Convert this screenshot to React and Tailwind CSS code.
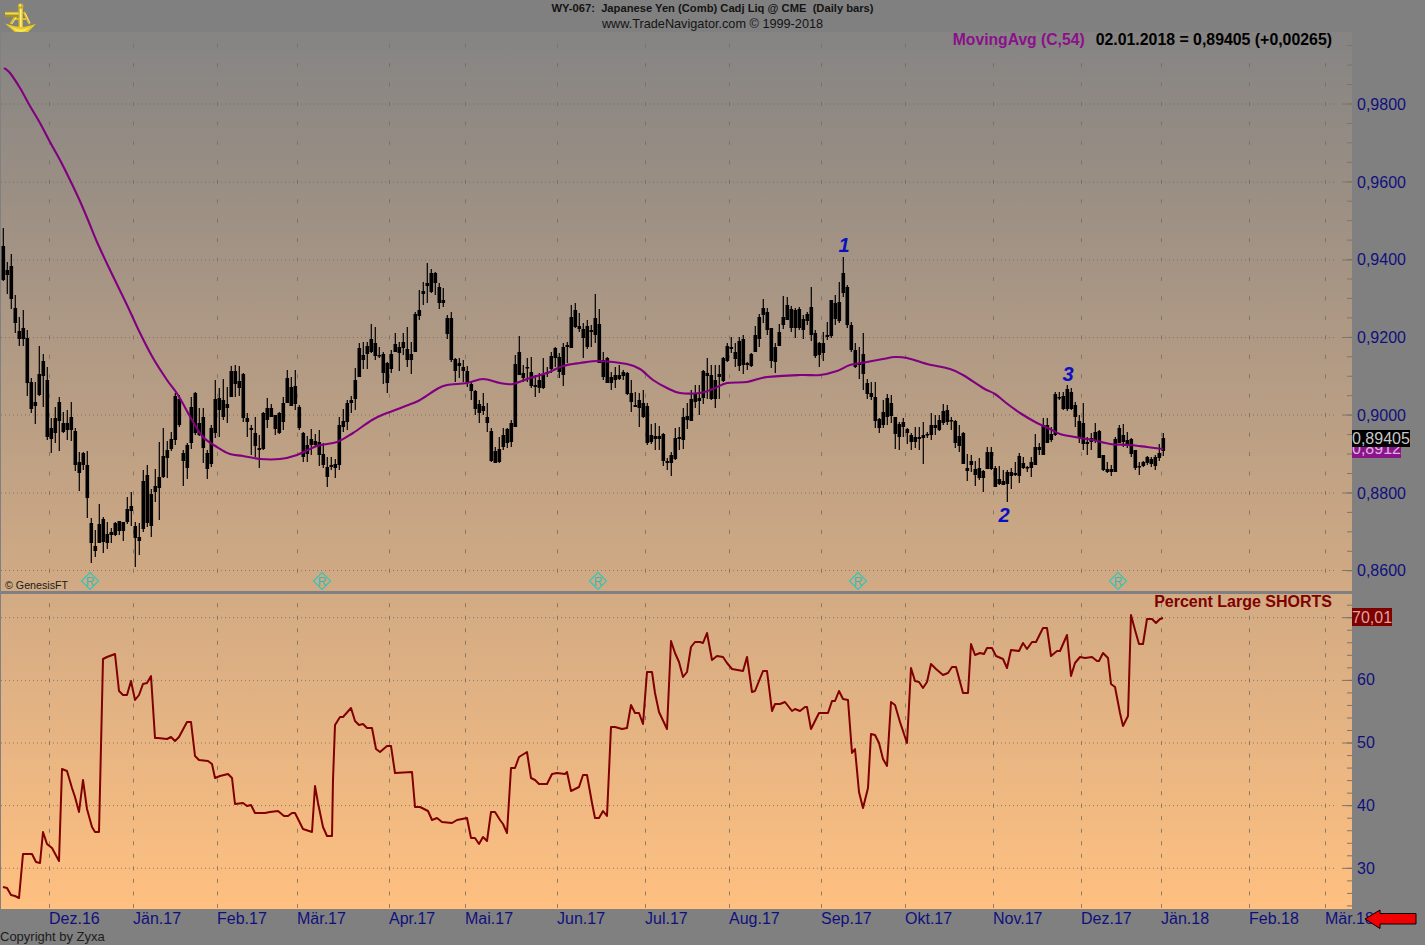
const candles = [
[228,246,280,281],[262,270,275,294],[254,266,299,309],[295,308,323,333],[317,331,339,346],[310,328,339,346],[330,338,383,396],[378,382,409,413],[382,402,406,424],[346,374,395,396],
[354,361,376,407],[367,380,437,440],[418,428,439,453],[407,418,433,443],[397,402,421,451],[412,423,432,433],[410,423,430,440],[402,417,430,441],[428,431,465,471],[452,462,473,491],
[452,453,465,470],[451,465,498,518],[518,523,543,563],[530,546,551,557],[504,524,543,543],[517,519,542,553],[522,534,543,549],[528,532,535,543],[522,523,535,536],[521,521,531,535],
[522,522,531,541],[497,509,522,524],[492,506,511,526],[522,526,538,567],[523,537,541,555],[470,481,529,532],[465,475,523,527],[489,494,526,537],[469,486,492,502],[442,477,488,520],
[428,456,477,478],[441,450,458,478],[432,439,449,451],[393,396,440,445],[395,399,425,427],[450,453,461,486],[443,445,468,479],[397,407,443,449],[392,393,433,435],[408,423,435,436],
[408,417,448,463],[450,453,469,479],[425,428,464,467],[380,399,433,438],[388,398,410,437],[379,400,417,420],[387,404,408,423],[366,371,397,397],[365,371,384,397],[366,381,388,396],
[373,374,418,422],[413,418,422,437],[425,428,430,455],[417,433,446,457],[435,448,450,468],[412,413,449,450],[398,408,420,428],[404,408,417,417],[415,415,429,435],[412,413,433,434],
[397,403,422,430],[370,378,403,403],[377,387,406,406],[370,386,404,410],[405,407,428,430],
[432,433,457,462],[436,445,454,462],[429,439,445,455],[434,441,445,447],[430,442,455,466],[443,454,465,468],[457,467,477,487],[457,465,467,470],[459,464,468,478],[417,425,465,470],
[409,421,427,432],[400,403,422,430],[396,400,403,413],[368,380,399,410],[343,348,377,377],[342,355,360,369],[342,346,354,369],[324,339,352,353],[327,343,356,360],[347,355,356,358],
[352,354,373,384],[362,363,383,393],[350,354,369,373],[333,344,352,352],[342,347,353,371],[333,342,348,355],[327,349,360,367],[342,354,360,374],[312,314,352,352],[290,310,316,320],
[282,291,294,305],[263,283,286,303],[269,273,292,293],[272,273,283,295],[283,287,303,309],[288,300,303,307],[315,318,334,339],[312,318,360,362],[358,359,371,382],[358,363,366,378],
[360,367,371,382],[366,371,382,387],[382,384,391,400],[390,391,409,415],[400,404,413,423],[393,406,411,415],[403,417,423,432],[428,431,461,462],[447,451,463,463],[437,449,462,463],
[428,435,447,450],[428,429,443,448],[420,423,442,447],[355,364,427,427],[336,352,375,375],[365,373,378,382],[358,367,368,382],[357,372,386,388],[375,385,387,397],[373,380,388,393],
[358,375,388,389],[367,372,373,377],[352,356,369,373],[347,348,358,367],[353,357,372,378],[343,347,375,386],[342,345,347,363],[305,317,348,348],[303,310,327,328],[313,326,329,332],
[323,329,338,358],[320,326,347,349],[325,330,332,347],[294,318,335,343],[309,324,363,363],
[352,360,377,380],[357,358,383,383],[372,377,383,390],[367,375,380,388],[365,375,379,380],[370,372,376,380],[372,373,394,395],[380,393,402,412],[392,405,407,407],[393,400,408,427],
[390,403,417,418],[403,406,443,445],[424,435,442,444],[423,436,439,450],[426,436,439,450],[433,434,461,466],[458,461,463,470],[452,455,463,476],[428,438,459,460],[427,437,439,450],
[408,417,440,449],[403,416,420,429],[390,399,421,421],[385,393,402,408],[385,398,401,415],[370,371,398,404],[358,373,376,399],[365,375,399,400],[365,380,399,408],[365,374,377,399],
[357,358,381,382],[343,346,361,362],[337,347,349,353],[343,352,359,367],[337,341,366,371],[335,339,365,374],[362,363,365,370],[353,354,366,367],[326,335,352,352],[314,317,339,347],
[299,308,315,323],[308,312,330,335],[328,328,361,368],[343,347,362,373],[324,332,346,346],[296,317,325,329],[297,305,320,320],[306,309,328,332],[308,310,328,338],[307,309,328,330],
[315,319,330,339],[312,314,321,325],[287,307,335,341],[330,333,356,358],[342,343,355,367],[332,343,353,361],[322,335,337,340],[300,300,336,338],[295,303,319,325],[282,302,321,323],
[257,273,293,297],[285,287,325,328],[322,325,350,352],[343,350,367,368],[347,363,365,379],[333,354,374,390],[379,383,394,399],[382,393,397,400],[382,397,421,428],[418,419,428,433],
[400,412,425,428],[394,398,417,425],[395,403,416,423],[417,417,434,449],[422,424,437,450],
[418,422,427,437],[428,429,433,444],[433,435,442,450],[427,437,442,448],[427,437,439,450],[422,435,438,464],[432,434,435,438],[413,425,435,440],[415,425,428,435],[415,420,430,431],
[404,411,423,425],[405,410,422,425],[417,420,421,430],[420,421,443,448],[425,436,446,452],[432,433,464,464],[454,468,471,481],[455,461,465,472],[461,469,475,486],[458,468,478,480],
[470,471,478,492],[447,452,469,469],[447,452,469,470],[466,468,487,487],[466,479,484,485],[470,481,485,485],[470,472,484,502],[468,472,476,489],[462,473,475,476],[453,456,476,483],
[457,463,468,469],[466,467,468,472],[457,462,468,477],[434,447,465,465],[443,447,450,455],[418,425,455,455],[418,425,443,443],[427,434,440,442],[392,394,435,436],[392,397,398,400],
[392,396,409,410],[385,389,409,411],[388,392,409,410],[402,405,417,427],[415,421,438,443],[403,423,444,450],[437,442,444,455],[433,438,442,450],[423,432,440,443],[430,431,458,458],
[455,455,470,471],[462,469,472,473],[465,469,472,476],[437,439,472,472],[425,428,443,443],[424,435,442,447],[432,440,445,448],[438,439,454,457],[450,450,468,470],[462,466,467,475],
[461,462,466,467],[456,457,463,465],[457,459,464,467],[455,457,466,470],[444,453,458,461],[433,438,451,456],
];

const maPts = "4,68 10,73 20,88 30,106 40,123 50,142 60,160 70,180 79,199 88,220 97,242 110,270 127,305 140,333 153,358 167,380 178,395 192,420 203,437 217,447 230,454 243,456 260,459 280,459 297,455 317,446 337,442 353,433 372,420 387,413 403,407 420,400 437,389 447,385 467,383 483,379 500,383 513,384 530,378 547,373 563,366 580,363 600,361 627,364 640,369 653,380 667,388 680,393 700,393 713,389 727,383 747,382 767,377 800,375 820,375 837,371 850,365 867,362 883,359 895,357 907,358 927,364 950,369 963,375 983,388 995,394 1005,402 1020,413 1037,423 1050,429 1060,434 1080,438 1093,440 1110,444 1130,445 1147,447 1163,449"
  .split(" ")
  .map((p) => p.split(",").map(Number));

function smooth(pts) {
  let d = `M${pts[0][0]} ${pts[0][1]}`;
  for (let i = 0; i < pts.length - 1; i++) {
    const p0 = pts[Math.max(i - 1, 0)];
    const p1 = pts[i];
    const p2 = pts[i + 1];
    const p3 = pts[Math.min(i + 2, pts.length - 1)];
    d += ` C${p1[0] + (p2[0] - p0[0]) / 6} ${p1[1] + (p2[1] - p0[1]) / 6} ${p2[0] - (p3[0] - p1[0]) / 6} ${p2[1] - (p3[1] - p1[1]) / 6} ${p2[0]} ${p2[1]}`;
  }
  return d;
}

const shorts = "3,887 7,888 11,895 15,896 19,898 23,854 32,854 36,862 40,863 43,832 47,844 52,848 59,861 62,769 67,771 72,788 75,797 79,812 83,780 87,809 92,827 95,832 99,832 102,703 103,659 107,657 115,654 119,691 123,695 127,695 131,681 135,700 139,695 143,684 147,683 151,676 155,738 158,738 167,739 171,737 175,741 179,737 187,722 191,722 195,756 199,760 208,761 212,764 215,778 220,776 228,774 232,778 235,804 243,803 247,806 251,805 255,813 265,813 270,812 278,811 284,816 288,816 292,813 295,813 303,829 312,832 315,786 318,803 323,827 327,836 332,836 333,780 335,725 340,717 343,717 351,708 355,721 359,725 363,724 367,728 372,728 376,749 380,752 387,746 391,746 395,773 412,772 415,807 420,807 428,811 432,820 437,818 442,822 452,823 457,820 467,818 471,838 475,838 479,844 483,837 487,841 491,812 495,812 500,820 503,824 507,833 511,768 515,768 519,757 527,752 531,778 535,780 539,784 547,784 552,774 557,773 565,774 567,772 571,791 579,787 583,775 587,775 592,803 595,818 599,818 603,811 607,816 611,727 615,727 622,729 627,728 631,705 635,713 639,713 643,724 647,672 652,672 655,693 659,712 667,729 671,641 675,653 679,662 683,677 687,672 691,647 695,642 700,642 703,643 707,633 712,660 717,656 723,657 727,663 732,669 743,671 747,657 752,692 755,691 763,671 767,671 772,711 775,704 780,704 785,702 792,711 795,709 800,711 805,707 807,707 811,729 819,713 828,713 832,701 835,701 839,691 843,699 848,700 852,753 855,749 859,792 863,808 868,788 871,734 875,735 879,743 883,759 887,766 891,702 895,705 900,722 907,743 911,668 915,681 919,682 923,688 927,682 931,664 936,669 943,675 948,673 952,667 956,667 963,693 968,693 971,644 975,655 980,653 984,654 987,648 992,648 996,656 1003,659 1007,668 1011,650 1019,651 1023,643 1027,649 1032,642 1036,642 1043,628 1047,628 1051,656 1057,651 1060,651 1067,635 1071,676 1075,663 1080,657 1085,658 1092,657 1097,661 1099,661 1103,653 1108,658 1111,684 1115,687 1120,713 1123,726 1128,716 1131,615 1135,630 1139,644 1143,644 1147,619 1152,619 1156,623 1160,619 1163,618";

const monthX = [49.5,133.5,217.5,297.5,389.5,465.5,557.5,645.5,729.5,821.5,905.5,993.5,1081.5,1161.5,1249.5,1325.5];
const topGrid = [104,182,260,337.5,415,493,570.5];
const lowGrid = [617.7,680.4,743,805.6,868.3];
const topSteps = Array.from({ length: 28 }, (_, i) => 45.6 + i * 19.45);
const lowSteps = Array.from({ length: 25 }, (_, i) => 605.2 + i * 12.53);
const diamonds = [90, 322, 598, 858, 1118];

function Ticks({ grid, steps, top, bottom, gridEnd = 1337 }) {
  return (
    <g>
      {grid.map((y) => (
        <line key={y} x1="1" x2={gridEnd} y1={y} y2={y} stroke="#6e6658" strokeOpacity="0.75" strokeDasharray="1 3" />
      ))}
      {monthX.map((x) => (
        <g key={x}>
          {steps.map((y) =>
            y > top && y < bottom ? (
              <line key={y} x1={x} x2={x} y1={y - 2} y2={y + 2} stroke="#746c60" strokeOpacity="0.8" />
            ) : null
          )}
        </g>
      ))}
      {steps.map((y) =>
        y > top && y < bottom ? (
          <line key={y} x1="1347" x2="1352" y1={y} y2={y} stroke="#7d7468" />
        ) : null
      )}
      {grid.map((y) => (
        <line key={y} x1="1342" x2="1352" y1={y} y2={y} stroke="#7d7468" />
      ))}
    </g>
  );
}

function Logo() {
  return (
    <svg width="36" height="36" viewBox="0 0 36 36" className="block overflow-visible">
      <path d="M17 12 L9.5 24 M23 12 L28.5 24 M12 19 L27 19" stroke="#d8bc28" strokeWidth="2.2" fill="none" />
      <path d="M18 13 L11 24 M24 13 L29 23" stroke="#fff3a0" strokeWidth="0.8" fill="none" />
      <rect x="4" y="11.5" width="13" height="5.5" fill="#a8921c" />
      <rect x="4" y="12.5" width="13" height="2" fill="#f0dc60" />
      <rect x="17.5" y="8" width="4.5" height="25" fill="#d9bd24" />
      <rect x="19" y="8" width="1.6" height="24" fill="#fff08a" />
      <circle cx="19.7" cy="6" r="2.8" fill="#c9ae20" />
      <circle cx="19.2" cy="5.4" r="1.1" fill="#fff08a" />
      <path d="M4 23.5 C9 24.5 14 27 20 27 C25 27 30 25 35 24 L26 33 L20 35 L15 33 Z" fill="#e6c922" />
      <path d="M9 26 C13 28 17 29.5 20 29.5 C24 29.5 27 28 30 26.5 L24 31 L20 32 L15 31 Z" fill="#f8e660" />
      <path d="M15 33 L20 35 L26 33 L23 35.5 L17 35.5 Z" fill="#8f7e16" />
    </svg>
  );
}

export default function App() {
  return (
    <div className="w-[1425px] h-[945px] overflow-hidden bg-[#808080] flex flex-col font-['Liberation_Sans',Arial,sans-serif]">
      <header className="h-8 shrink-0 grid grid-cols-[1fr_auto_1fr] text-[#141414]">
        <div className="pl-px">
          <Logo />
        </div>
        <div className="flex flex-col items-center">
          <div className="h-4 text-[11.2px] leading-[17px] font-bold whitespace-pre">{"WY-067:  Japanese Yen (Comb) Cadj Liq @ CME  (Daily bars)"}</div>
          <div className="h-4 text-[12.7px] leading-[17px]">www.TradeNavigator.com © 1999-2018</div>
        </div>
        <div />
      </header>

      <div className="h-[877px] shrink-0 flex">
        <div className="ml-px w-[1351px] flex flex-col bg-linear-to-b from-[#858483] to-[#ffc080]">
          <section className="relative h-[559px]">
            <svg width="1351" height="559" viewBox="1 32 1351 559" className="block">
              <Ticks grid={topGrid} steps={topSteps} top={32} bottom={591} />
              <g fill="#000">
                {candles.map(([h, t, b, l], i) => (
                  <g key={i}>
                    <rect x={2.7 + i * 4} y={h} width="1.2" height={Math.max(l - h, 1)} />
                    <rect x={1.5 + i * 4} y={t} width="3.6" height={Math.max(b - t, 1.5)} />
                  </g>
                ))}
              </g>
              <path d={smooth(maPts)} fill="none" stroke="#800080" strokeWidth="2.1" strokeLinejoin="round" />
              <g fontFamily="Liberation Sans, Arial, sans-serif" fontSize="20" fontWeight="700" fontStyle="italic" fill="#0a10c0" textAnchor="middle">
                <text x="844" y="252">1</text>
                <text x="1004" y="522">2</text>
                <text x="1068" y="381">3</text>
              </g>
              {diamonds.map((x) => (
                <g key={x}>
                  <path d={`M${x} 572.5 L${x + 8.5} 581 L${x} 589.5 L${x - 8.5} 581 Z`} fill="none" stroke="#38c4b6" strokeWidth="1.2" />
                  <text x={x} y="585.5" fontSize="12" fill="#30bcb4" textAnchor="middle" fontFamily="Liberation Sans, Arial, sans-serif">R</text>
                </g>
              ))}
            </svg>
            <div className="absolute top-0 right-5 flex gap-[11px] leading-[15px] font-bold whitespace-nowrap">
              <span className="text-[15.7px] text-[#8b108b]">MovingAvg (C,54)</span>
              <span className="text-[15.87px] text-black">02.01.2018 = 0,89405 (+0,00265)</span>
            </div>
            <div className="absolute left-1 bottom-0 text-[10.7px] leading-3 text-[#1a1a1a]">© GenesisFT</div>
          </section>

          <div className="h-[3px] bg-[#808080]" />

          <section className="relative h-[315px]">
            <svg width="1351" height="315" viewBox="1 594 1351 315" className="block">
              <Ticks grid={lowGrid} steps={lowSteps} top={594} bottom={909} />
              <polyline points={shorts} fill="none" stroke="#800000" strokeWidth="2" strokeLinejoin="round" />
            </svg>
            <div className="absolute top-0 right-5 text-[16px] leading-[15px] font-bold text-[#800000] whitespace-nowrap">Percent Large SHORTS</div>
          </section>
        </div>

        <aside className="relative flex-1 flex flex-col text-[16px] text-[#10107c]">
          <div className="h-[34px]" />
          {["0,9800", "0,9600", "0,9400", "0,9200", "0,9000", "0,8800", "0,8600"].map((v) => (
            <div key={v} className="h-[77.75px] pl-[5px] flex items-center">{v}</div>
          ))}
          <div className="-mt-[2px] h-[18px] w-10 bg-[#800000] text-[#d8a8a0] leading-[19px] overflow-hidden">70,01</div>
          <div className="h-[22px]" />
          {["60", "50", "40", "30"].map((v) => (
            <div key={v} className="h-[63px] pl-[5px] flex items-center">{v}</div>
          ))}
          <div className="absolute left-0 top-[408px] h-[18px] w-[49px] bg-[#8a158a] text-[#e0b0e0] leading-[18px] overflow-hidden">0,8912</div>
          <div className="absolute left-0 top-[398px] h-[17px] w-[58px] bg-black text-[#c8c8c8] leading-[18px] overflow-hidden">0,89405</div>
        </aside>
      </div>

      <footer className="relative flex-1 text-[#10107c]">
        <div className="h-5 pl-[49px] flex text-[16px] leading-5 whitespace-nowrap">
          <span className="w-[84px]">Dez.16</span>
          <span className="w-[84px]">Jän.17</span>
          <span className="w-[80px]">Feb.17</span>
          <span className="w-[92px]">Mär.17</span>
          <span className="w-[76px]">Apr.17</span>
          <span className="w-[92px]">Mai.17</span>
          <span className="w-[88px]">Jun.17</span>
          <span className="w-[84px]">Jul.17</span>
          <span className="w-[92px]">Aug.17</span>
          <span className="w-[84px]">Sep.17</span>
          <span className="w-[88px]">Okt.17</span>
          <span className="w-[88px]">Nov.17</span>
          <span className="w-[80px]">Dez.17</span>
          <span className="w-[88px]">Jän.18</span>
          <span className="w-[76px]">Feb.18</span>
          <span>Mär.18</span>
        </div>
        <div className="h-4 text-[13px] leading-4 text-[#1c1c1c]">Copyright by Zyxa</div>
        <svg width="54" height="21" viewBox="0 0 54 21" className="absolute left-[1364px] top-0">
          <path d="M1 10 L16 1 L16 4.5 L52 4.5 L52 15 L16 15 L16 19.5 Z" fill="#f00000" stroke="#000" />
        </svg>
      </footer>
    </div>
  );
}
